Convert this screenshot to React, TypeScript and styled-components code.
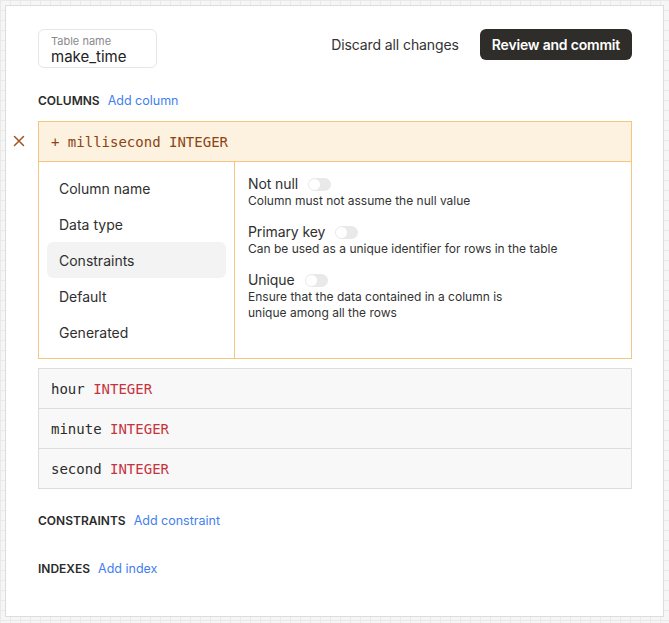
import React from 'react';
import styled, { createGlobalStyle } from 'styled-components';

const GlobalStyle = createGlobalStyle`
  html, body {
    margin: 0;
    padding: 0;
  }
  body {
    font-family: Inter, 'Noto Sans', 'Liberation Sans', sans-serif;
    color: #2b2b2b;
    background-color: #f6f6f6;
    background-image:
      linear-gradient(to right, #e9e9e9 1px, transparent 1px),
      linear-gradient(to bottom, #e9e9e9 1px, transparent 1px);
    background-size: 10px 10px;
    min-height: 623px;
  }
`;

const Page = styled.div`
  padding: 5px;
`;

const Panel = styled.div`
  width: 659px;
  height: 612px;
  box-sizing: border-box;
  background: #fff;
  border: 1px solid #dddddd;
  padding: 23px 31px 0 32px;
`;

const TopBar = styled.div`
  display: flex;
  align-items: flex-start;
  justify-content: space-between;
`;

const NameField = styled.div`
  width: 119px;
  height: 39px;
  box-sizing: border-box;
  border: 1px solid #e6e6e6;
  border-radius: 6px;
  padding: 5px 12px 0;
  display: flex;
  flex-direction: column;
`;

const NameLabel = styled.span`
  font-size: 11px;
  line-height: 13px;
  color: #8a8a8a;
`;

const NameValue = styled.span`
  font-size: 15px;
  line-height: 18px;
  color: #222;
`;

const Actions = styled.div`
  display: flex;
  align-items: center;
  gap: 21px;
`;

const GhostButton = styled.button`
  border: none;
  background: none;
  font: inherit;
  font-size: 14px;
  letter-spacing: -0.1px;
  color: #333;
  padding: 0;
  height: 31px;
  cursor: pointer;
`;

const PrimaryButton = styled.button`
  border: none;
  background: #2e2d2a;
  color: #fff;
  font: inherit;
  font-size: 14px;
  font-weight: 600;
  letter-spacing: -0.2px;
  height: 31px;
  padding: 0 12px;
  border-radius: 6px;
  cursor: pointer;
`;

const SectionHead = styled.div<{ $top: number }>`
  display: flex;
  align-items: center;
  gap: 8px;
  height: 20px;
  margin-top: ${p => p.$top}px;
`;

const SectionTitle = styled.span`
  font-size: 12px;
  font-weight: 600;
  color: #2b2b2b;
`;

const SectionLink = styled.a`
  font-size: 12.5px;
  color: #3f7ff0;
  text-decoration: none;
  cursor: pointer;
`;

const EditedCard = styled.div`
  position: relative;
  margin-top: 11px;
  border: 1px solid #f3c77f;
`;

const RemoveMark = styled.span`
  position: absolute;
  left: -26px;
  top: 13px;
  color: #a4521f;
  display: flex;
`;

const EditedHeader = styled.div`
  height: 39px;
  display: flex;
  align-items: center;
  padding: 0 12px;
  background: #fdf1df;
  border-bottom: 1px solid #f3c77f;
  font-family: 'DejaVu Sans Mono', 'Liberation Mono', monospace;
  font-size: 14px;
  color: #8a4514;
  white-space: pre;
`;

const EditedBody = styled.div`
  display: grid;
  grid-template-columns: 196px 1fr;
  height: 196px;
`;

const SideNav = styled.div`
  border-right: 1px solid #f3c77f;
  padding: 8px 8px;
  display: flex;
  flex-direction: column;
`;

const NavItem = styled.div<{ $active?: boolean }>`
  height: 36px;
  display: flex;
  align-items: center;
  padding-left: 12px;
  font-size: 14px;
  color: #2f2f2f;
  border-radius: 6px;
  background: ${p => (p.$active ? '#f3f3f3' : 'transparent')};
`;

const OptionList = styled.div`
  padding: 13px 13px;
  display: flex;
  flex-direction: column;
  gap: 14px;
`;

const Option = styled.div`
  display: flex;
  flex-direction: column;
`;

const OptionTitle = styled.div`
  display: flex;
  align-items: center;
  gap: 10px;
  font-size: 14px;
  line-height: 18px;
  letter-spacing: -0.1px;
  color: #2f2f2f;
`;

const OptionText = styled.div`
  font-size: 12px;
  line-height: 16px;
  color: #333;
`;

const Toggle = styled.span`
  position: relative;
  width: 23px;
  height: 13px;
  border-radius: 7px;
  background: #e9e9e9;

  &::after {
    content: '';
    position: absolute;
    left: 1px;
    top: 1px;
    width: 11px;
    height: 11px;
    border-radius: 50%;
    background: #fff;
  }
`;

const ColumnList = styled.div`
  margin-top: 9px;
  border: 1px solid #dddddd;
  background: #f8f8f8;
`;

const ColumnRow = styled.div`
  height: 39px;
  display: flex;
  align-items: center;
  padding: 0 12px;
  font-family: 'DejaVu Sans Mono', 'Liberation Mono', monospace;
  font-size: 14px;
  color: #2b2b2b;
  white-space: pre;

  & + & {
    border-top: 1px solid #dddddd;
  }
`;

const TypeName = styled.span`
  color: #c53340;
`;

const navItems = ['Column name', 'Data type', 'Constraints', 'Default', 'Generated'];

const options = [
  { title: 'Not null', text: ['Column must not assume the null value'] },
  { title: 'Primary key', text: ['Can be used as a unique identifier for rows in the table'] },
  { title: 'Unique', text: ['Ensure that the data contained in a column is', 'unique among all the rows'] },
];

const columns = ['hour', 'minute', 'second'];

const CloseIcon = () => (
  <svg width="12" height="12" viewBox="0 0 12 12" fill="none">
    <path d="M1.5 1.5l9 9M10.5 1.5l-9 9" stroke="currentColor" strokeWidth="1.5" strokeLinecap="round" />
  </svg>
);

const App: React.FC = () => (
  <Page>
    <GlobalStyle />
    <Panel>
      <TopBar>
        <NameField>
          <NameLabel>Table name</NameLabel>
          <NameValue>make_time</NameValue>
        </NameField>
        <Actions>
          <GhostButton>Discard all changes</GhostButton>
          <PrimaryButton>Review and commit</PrimaryButton>
        </Actions>
      </TopBar>

      <SectionHead $top={22}>
        <SectionTitle>COLUMNS</SectionTitle>
        <SectionLink>Add column</SectionLink>
      </SectionHead>

      <EditedCard>
        <RemoveMark>
          <CloseIcon />
        </RemoveMark>
        <EditedHeader>+ millisecond INTEGER</EditedHeader>
        <EditedBody>
          <SideNav>
            {navItems.map(item => (
              <NavItem key={item} $active={item === 'Constraints'}>
                {item}
              </NavItem>
            ))}
          </SideNav>
          <OptionList>
            {options.map(opt => (
              <Option key={opt.title}>
                <OptionTitle>
                  {opt.title}
                  <Toggle />
                </OptionTitle>
                {opt.text.map(line => (
                  <OptionText key={line}>{line}</OptionText>
                ))}
              </Option>
            ))}
          </OptionList>
        </EditedBody>
      </EditedCard>

      <ColumnList>
        {columns.map(name => (
          <ColumnRow key={name}>
            {name} <TypeName>INTEGER</TypeName>
          </ColumnRow>
        ))}
      </ColumnList>

      <SectionHead $top={21}>
        <SectionTitle>CONSTRAINTS</SectionTitle>
        <SectionLink>Add constraint</SectionLink>
      </SectionHead>

      <SectionHead $top={28}>
        <SectionTitle>INDEXES</SectionTitle>
        <SectionLink>Add index</SectionLink>
      </SectionHead>
    </Panel>
  </Page>
);

export default App;
